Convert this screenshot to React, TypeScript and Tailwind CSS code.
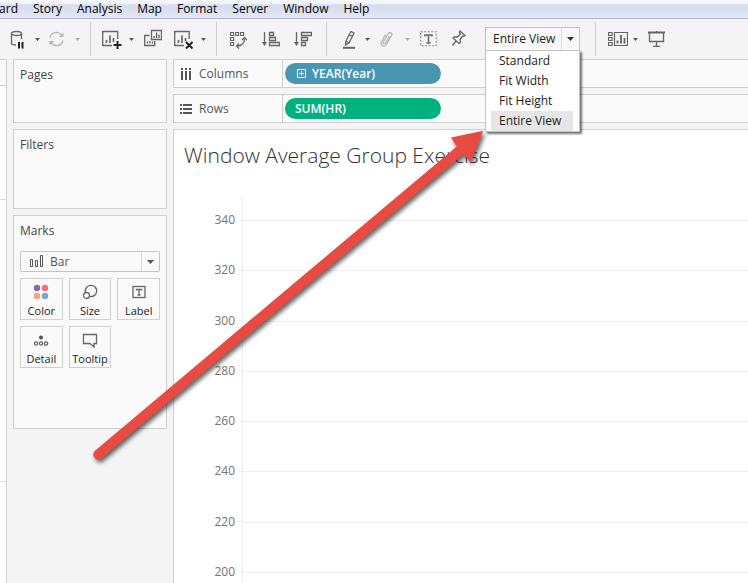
import type { ReactNode } from "react";

const ui = "font-['Open_Sans','Noto_Sans',sans-serif]";
const menuItems = ["Story", "Analysis", "Map", "Format", "Server", "Window", "Help"];
const fitModes = ["Standard", "Fit Width", "Fit Height", "Entire View"];
const ticks = [340, 320, 300, 280, 260, 240, 220, 200];

function Icon({ w, h = 24, children }: { w: number; h?: number; children: ReactNode }) {
  return (
    <svg width={w} height={h} viewBox={`0 0 ${w} ${h}`} fill="none" stroke="#666" strokeWidth="1.3" className="block shrink-0" aria-hidden="true">
      {children}
    </svg>
  );
}

function Tool({ label, className, children }: { label: string; className: string; children: ReactNode }) {
  return (
    <button type="button" aria-label={label} className={`shrink-0 ${className}`}>
      {children}
    </button>
  );
}

function Caret({ label, className, light = false }: { label: string; className: string; light?: boolean }) {
  return (
    <Tool label={label} className={className}>
      <Icon w={6}>
        <path d="M1 11h5L3.500 14z" fill={light ? "#aaa" : "#555"} stroke="none" />
      </Icon>
    </Tool>
  );
}

function Divider({ className }: { className: string }) {
  return <div className={`h-[34px] w-px shrink-0 bg-[#cfcfcf] ${className}`} />;
}

function Toolbar() {
  return (
    <div className="flex h-10 items-center bg-[#f4f4f4] pl-2.5">
      <Tool label="Pause data source updates" className="">
        <Icon w={14}>
          <ellipse cx="6.500" cy="6.500" rx="5" ry="2" />
          <path d="M1.500 6.500v9.500c0 1.400 1.600 2 4.500 2M11.500 6.500v5.500" />
          <path d="M9 15v6.500M12.500 15v6.500" stroke="#222" strokeWidth="2" />
        </Icon>
      </Tool>
      <Caret label="Update options" className="ml-2.5" />
      <Tool label="Refresh" className="ml-2">
        <Icon w={17}>
          <g stroke="#b4b4b4">
            <path d="M2 10.500A6.500 6.500 0 0 1 13.500 8M15 13.500A6.500 6.500 0 0 1 3.500 16" />
            <path d="M15.500 5.500v4.500h-4.500zM1.500 18.500V14H6z" fill="#b4b4b4" stroke="none" />
          </g>
        </Icon>
      </Tool>
      <Caret label="Refresh options" className="ml-[9px]" light />
      <Divider className="ml-2.5" />
      <Tool label="New worksheet" className="ml-[11px]">
        <Icon w={20}>
          <path d="M10 18.500H.7V4.500h15V12" />
          <path d="M4.500 16v-3M8 16V8.500M11.500 15v-4" strokeWidth="1.700" />
          <path d="M15.500 14v8M11.500 18h8" stroke="#222" strokeWidth="2" />
        </Icon>
      </Tool>
      <Caret label="New worksheet options" className="ml-1.5" />
      <Tool label="Duplicate sheet" className="ml-2.5">
        <Icon w={18}>
          <path d="M7.500 3.500h10v9h-10zM5.500 8.500H.7v10h10v-4.500" />
          <path d="M10 11V9M12.500 11V5.500M15 11V7.500M3.500 16.500v-2M6 16.500v-2.500M8.500 16.500v-2" />
        </Icon>
      </Tool>
      <Tool label="Clear sheet" className="ml-3">
        <Icon w={20}>
          <path d="M10 18.500H.7V4.500h14.500V12" />
          <path d="M4.500 16v-3M8 16V8.500M11.500 14v-3" strokeWidth="1.700" />
          <path d="M12 15l6.500 6.500M18.500 15L12 21.500" stroke="#222" strokeWidth="2" />
        </Icon>
      </Tool>
      <Caret label="Clear options" className="ml-1.5" />
      <Divider className="ml-2.5" />
      <Tool label="Swap rows and columns" className="ml-[13px]">
        <Icon w={17}>
          <path d="M.6 5.500h3v3h-3zM5.600 5.500h3v3h-3zM10.600 5.500h3v3h-3zM.6 10.500h3v3h-3zM.6 15.500h3v3h-3z" strokeWidth="1.100" />
          <path d="M14.500 12c0 4-3 7-7 7M12 13l2.500-2.500L17 13M9 16.500L6.500 19 9 21.500" />
        </Icon>
      </Tool>
      <Tool label="Sort ascending" className="ml-[15px]">
        <Icon w={18}>
          <path d="M2.500 5v12" />
          <path d="M0 15h5l-2.500 4z" fill="#666" stroke="none" />
          <path d="M7.500 5.500h4v3h-4zM7.500 10.500h6v3h-6zM7.500 15.500h10v3h-10z" />
        </Icon>
      </Tool>
      <Tool label="Sort descending" className="ml-3.5">
        <Icon w={18}>
          <path d="M2.500 5v12" />
          <path d="M0 15h5l-2.500 4z" fill="#666" stroke="none" />
          <path d="M7.500 5.500h10v3h-10zM7.500 10.500h6v3h-6zM7.500 15.500h4v3h-4z" />
        </Icon>
      </Tool>
      <Divider className="ml-3.5" />
      <Tool label="Highlight" className="ml-[15px]">
        <Icon w={14}>
          <path d="M9 4.500l3 1.500-5 10-3.500 2 .5-4zM4 14l3 2M7.500 8l3 1.500" />
          <path d="M1 20.800h12" strokeWidth="2" />
        </Icon>
      </Tool>
      <Caret label="Highlight options" className="ml-2" />
      <Tool label="Group members" className="ml-[9px]">
        <Icon w={14}>
          <path d="M10.500 9L6.500 16c-1 1.500-3 .5-2.200-1l5-8.500c1.200-2 4.500-.5 3.200 2l-5 9c-2 3.300-6.800 1-5-2.500L6.500 7.500" stroke="#b4b4b4" />
        </Icon>
      </Tool>
      <Caret label="Group options" className="ml-[11px]" light />
      <Tool label="Show mark labels" className="ml-2.5">
        <Icon w={17}>
          <path d="M.7 4.700h15.500v14H.7z" strokeDasharray="2 1.500" stroke="#888" strokeWidth="1.100" />
          <path d="M5 9.500V8h7v1.500M8.500 8v8M6.500 16h4" strokeWidth="1.500" />
        </Icon>
      </Tool>
      <Tool label="Fix axes" className="ml-3.5">
        <Icon w={15}>
          <path d="M9 4l5 4.500-1.500.8-1-.3-2.500 3.500.5 3-1.500 1L2 11l1.500-1.200 3 .2L9.500 7 8.500 5.500zM5 14L1.500 18.500" />
        </Icon>
      </Tool>
      <FitPicker />
      <Divider className="ml-[15px]" />
      <Tool label="Show or hide cards" className="ml-3">
        <Icon w={20}>
          <path d="M.6 5.500h3.500v3H.6zM.6 10.500h3.500v3H.6zM.6 15.500h3.500v3H.6zM6.500 5.500h13v13h-13z" strokeWidth="1.200" />
          <path d="M9.500 16.500v-3M13 16.500V8M16.500 16.500v-5.500" strokeWidth="1.800" />
        </Icon>
      </Tool>
      <Caret label="Card options" className="ml-1" />
      <Tool label="Presentation mode" className="ml-2.5">
        <Icon w={18}>
          <path d="M0 5.500h17" strokeWidth="2" />
          <path d="M1.500 6v8.500h14V6M8.500 4v1M8.500 15v4M5 19.400h7" />
        </Icon>
      </Tool>
    </div>
  );
}

function FitPicker() {
  return (
    <div className="relative ml-[19px] w-[95px] shrink-0">
      <select aria-label="Fit" defaultValue="Entire View" className="block h-6 w-full appearance-none border border-[#c4c4c4] bg-[#f8f8f8] pl-[7px] text-xs text-[#222]">
        {fitModes.map((m) => (
          <option key={m}>{m}</option>
        ))}
      </select>
      <div className="pointer-events-none absolute inset-y-px right-px flex w-[18px] items-center justify-center border-l border-[#dcdcdc]">
        <svg width="7" height="4" aria-hidden="true">
          <path d="M0 0h7L3.500 4z" fill="#333" />
        </svg>
      </div>
      <div role="listbox" aria-label="Fit modes" className="absolute top-[23px] left-0 z-20 w-full border border-[#c4c4c4] bg-white pr-1.5 pl-[5px] shadow-[2px_2px_2px_rgba(0,0,0,0.55)]">
        {fitModes.map((m) => (
          <button
            key={m}
            type="button"
            role="option"
            aria-selected={m === "Entire View"}
            className={`block h-5 w-full pl-2 text-left text-xs leading-5 text-[#222] ${m === "Entire View" ? "bg-[#e6e6e6]" : ""}`}
          >
            {m}
          </button>
        ))}
      </div>
    </div>
  );
}

function Card({ title, className, children }: { title: string; className: string; children?: ReactNode }) {
  return (
    <section className={`border border-[#cfcfcf] bg-[#fafafa] px-1.5 pt-1.5 ${className}`}>
      <h2 className="text-xs leading-[18px] text-[#444]">{title}</h2>
      {children}
    </section>
  );
}

function MarkButton({ label, children }: { label: string; children: ReactNode }) {
  return (
    <button type="button" className="flex h-[42px] flex-col items-center border border-[#cfcfcf] bg-[#fafafa] pt-1">
      <Icon w={18} h={18}>
        {children}
      </Icon>
      <span className="text-[11px] leading-5 whitespace-nowrap text-[#222]">{label}</span>
    </button>
  );
}

function Shelf({ label, icon, children }: { label: string; icon: ReactNode; children: ReactNode }) {
  return (
    <div className="flex h-[29px] border border-r-0 border-[#cfcfcf] bg-[#fafafa]">
      <div className="flex w-[109px] items-center gap-[7px] border-r border-[#cfcfcf] pl-1.5 text-xs text-[#555]">
        {icon}
        {label}
      </div>
      <div className="flex items-center pl-0.5">{children}</div>
    </div>
  );
}

export default function App() {
  return (
    <div className={`relative flex min-h-screen flex-col overflow-hidden bg-[#f4f4f4] ${ui}`}>
      <nav className="flex h-[19px] items-center gap-[15px] border-b border-[#b0b7d2] bg-[linear-gradient(#f7f9fd_0,#eef1f9_4px,#d5dbed_5px,#e3e8f5_18px)] text-xs leading-[18px] text-black">
        <button type="button" className="flex w-[18px] shrink-0 justify-end overflow-hidden">Dashboard</button>
        {menuItems.map((m) => (
          <button key={m} type="button">{m}</button>
        ))}
      </nav>
      <Toolbar />
      <main className="flex flex-1">
        <div className="flex w-[7px] shrink-0 flex-col border-t border-r border-[#cfcfcf] bg-white">
          <div className="h-[26px] border-b border-[#cfcfcf] bg-[#fafafa]" />
          <div className="h-[114px] border-b border-[#ddd]" />
          <div className="h-[282px] border-b border-[#ddd]" />
        </div>
        <aside className="flex w-[166px] shrink-0 flex-col gap-1.5 px-1.5">
          <Card title="Pages" className="h-16" />
          <Card title="Filters" className="h-20" />
          <Card title="Marks" className="h-[214px]">
            <div className="relative mt-[11px]">
              <select aria-label="Mark type" defaultValue="Bar" className="block h-[21px] w-full appearance-none rounded-xs border border-[#c4c4c4] bg-[#fafafa] pl-[29px] text-xs text-[#555]">
                <option>Bar</option>
              </select>
              <svg width="14" height="12" className="pointer-events-none absolute top-1 left-2.5" fill="none" stroke="#555" aria-hidden="true">
                <path d="M.5 4.500h2v7h-2zM5.500 5.500h2v6h-2zM10.500.5h2v11h-2z" />
              </svg>
              <div className="pointer-events-none absolute inset-y-px right-px flex w-[18px] items-center justify-center border-l border-[#dcdcdc]">
                <svg width="7" height="4" aria-hidden="true">
                  <path d="M0 0h7L3.500 4z" fill="#555" />
                </svg>
              </div>
            </div>
            <div className="mt-1.5 grid grid-cols-3 gap-1.5">
              <MarkButton label="Color">
                <g stroke="none">
                  <circle cx="5" cy="5" r="3.200" fill="#866b98" />
                  <circle cx="13" cy="5" r="3.200" fill="#fb6b80" />
                  <circle cx="5" cy="13" r="3.200" fill="#f4a479" />
                  <circle cx="13" cy="13" r="3.200" fill="#7ea3cc" />
                </g>
              </MarkButton>
              <MarkButton label="Size">
                <circle cx="10" cy="8" r="5.700" />
                <circle cx="5.500" cy="12.500" r="3" fill="#fafafa" />
              </MarkButton>
              <MarkButton label="Label">
                <rect x="3" y="3.500" width="12" height="11" />
                <path d="M6.500 7.500v-1h5v1M9 6.500v5.500M7.500 12h3" />
              </MarkButton>
              <MarkButton label="Detail">
                <circle cx="9" cy="6.500" r="2" fill="#555" stroke="none" />
                <circle cx="4" cy="12.500" r="1.600" />
                <circle cx="9" cy="12.500" r="1.600" />
                <circle cx="14" cy="12.500" r="1.600" />
              </MarkButton>
              <MarkButton label="Tooltip">
                <path d="M2.500 3.500h13v9h-2.500v3.500L9 12.500H2.500z" />
              </MarkButton>
            </div>
          </Card>
        </aside>
        <div className="flex min-w-0 flex-1 flex-col gap-1.5">
          <Shelf
            label="Columns"
            icon={
              <svg width="12" height="12" fill="#555" aria-hidden="true">
                <path d="M1 0h2v2H1zM5 0h2v2H5zM9 0h2v2H9zM1 3h2v9H1zM5 3h2v9H5zM9 3h2v9H9z" />
              </svg>
            }
          >
            <button type="button" className="flex h-[21px] w-[156px] items-center rounded-full bg-[#4996b2] pl-3 text-xs font-semibold text-white">
              <svg width="9" height="9" fill="none" stroke="#fff" className="mr-1.5" aria-hidden="true">
                <path d="M.5.5h8v8h-8zM4.500 2v5M2 4.500h5" />
              </svg>
              YEAR(Year)
            </button>
          </Shelf>
          <Shelf
            label="Rows"
            icon={
              <svg width="12" height="12" fill="#555" aria-hidden="true">
                <path d="M0 1h2v2H0zM0 5h2v2H0zM0 9h2v2H0zM3 1h9v2H3zM3 5h9v2H3zM3 9h9v2H3z" />
              </svg>
            }
          >
            <button type="button" className="flex h-[21px] w-[156px] items-center rounded-full bg-[#00b180] pl-2.5 text-xs font-semibold text-white">SUM(HR)</button>
          </Shelf>
          <section className="flex flex-1 flex-col border-t border-l border-[#cfcfcf] bg-white">
            <h1 className="pt-[11px] pl-2.5 text-[21px] leading-7 font-light whitespace-nowrap text-[#333]">Window Average Group Exercise</h1>
            <div className="mt-[27px] flex flex-1">
              <div className="flex h-[384px] w-[68px] shrink-0 flex-col justify-between pt-4 text-xs leading-4 text-[#737373]">
                {ticks.map((t) => (
                  <div key={t} className="flex h-4 items-center justify-end gap-1">
                    {t}
                    <span className="h-px w-[3px] bg-[#eee]" />
                  </div>
                ))}
              </div>
              <div className="flex-1 border-l border-[#eee] pt-6">
                <div className="flex h-[352px] flex-col">
                  {ticks.slice(1).map((t) => (
                    <div key={t} className="flex-1 border-t border-[#eee]" />
                  ))}
                </div>
                <div className="border-t border-[#eee]" />
              </div>
            </div>
          </section>
        </div>
      </main>
      <svg width="400" height="350" viewBox="90 120 400 350" className="pointer-events-none absolute top-[120px] left-[90px] z-10 drop-shadow-[2px_3px_2px_rgba(0,0,0,0.6)]" aria-hidden="true">
        <path d="M95 450.700L456.700 146.500L451 137.500L483.300 130.700L470.700 162L463.500 154L101.500 458.300A5 5 0 0 1 95 450.700Z" fill="#e94b43" />
      </svg>
    </div>
  );
}
